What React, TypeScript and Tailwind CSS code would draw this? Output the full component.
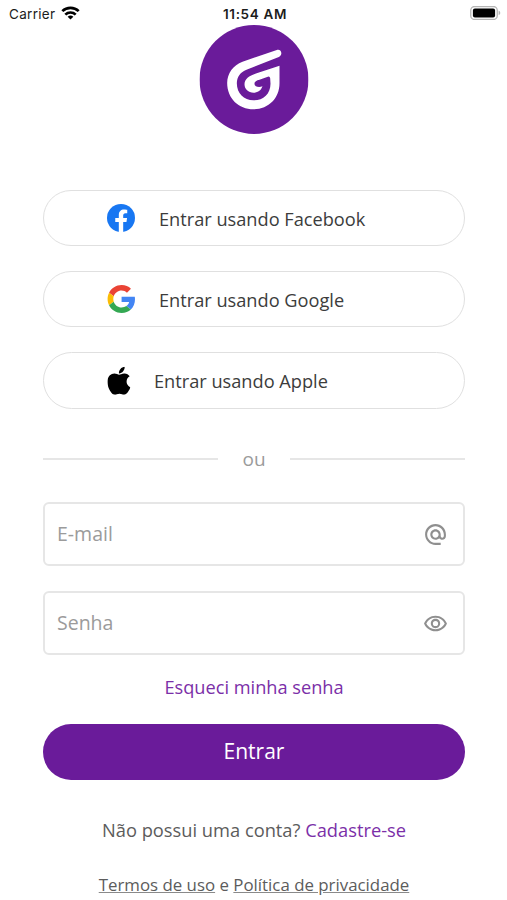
import type { ReactNode } from 'react';
import { MdAlternateEmail, MdOutlineRemoveRedEye } from 'react-icons/md';

function StatusBar() {
  return (
    <div className="grid h-[26px] shrink-0 grid-cols-3 items-center pt-[2px] pr-[6px] pl-[9px] font-[Inter,sans-serif] text-[13.5px] text-[#1c1c1c]">
      <div className="flex items-center gap-[6px]">
        <span className="tracking-[0.3px]">Carrier</span>
        <svg className="-mt-[3px]" width="19" height="14" viewBox="0 0 19 14" fill="none" stroke="#000" strokeWidth="2.7">
          <path d="M1.3 5.1a11.8 11.8 0 0 1 16.4 0" />
          <path d="M4.3 8.6a7.5 7.5 0 0 1 10.4 0" />
          <path d="M9.5 13.6 6.6 10.8a4.2 4.2 0 0 1 5.8 0z" fill="#000" stroke="none" />
        </svg>
      </div>
      <span className="text-center font-semibold tracking-[0.65px] whitespace-nowrap">11:54 AM</span>
      <svg className="-mt-[2px] justify-self-end" width="31" height="14" viewBox="0 0 31 14">
        <rect x="0.75" y="0.5" width="26.5" height="13" rx="3.8" fill="#fff" stroke="#b5b5b5" strokeWidth="1.3" />
        <rect x="2.9" y="2.4" width="22.2" height="9.2" rx="2" fill="#000" />
        <path d="M28.6 4.7c2.2.6 2.2 3.8 0 4.4z" fill="#b5b5b5" />
      </svg>
    </div>
  );
}

function Logo() {
  return (
    <svg className="mx-auto -mt-px shrink-0 translate-x-[0.5px]" width="109" height="109" viewBox="29 30 327 327">
      <circle cx="192.5" cy="193.5" r="163.5" fill="#6a1b9a" />
      <path
        fill="#fff"
        d="M261 105L158 140C130 150 112 175 112 204C112 250 146 283 191 283C236 283 269 250 269 205L269 152L205 173C180 181 164 190 164 208C164 223 176 233 191 233C205 233 214 226 218 214C208 218 194 216 194 206C194 199 200 196 209 194L234 185Q240 183 241 190L242 206C242 237 220 256 191 256C162 256 141 235 141 205C141 185 152 171 170 164L267 126C280 120 275 101 261 105Z"
      />
    </svg>
  );
}

function FacebookIcon() {
  return (
    <svg width="28" height="28" viewBox="0 0 24 24">
      <circle cx="12" cy="12" r="12" fill="#1877f2" />
      <path
        fill="#fff"
        d="M16.671 15.47l.532-3.47h-3.328V9.749c0-.949.465-1.874 1.956-1.874h1.513V4.922s-1.374-.235-2.686-.235c-2.741 0-4.533 1.662-4.533 4.669V12H7.078v3.47h3.047V24h3.75v-8.53z"
      />
    </svg>
  );
}

function GoogleIcon() {
  return (
    <svg width="28" height="28" viewBox="-1 0 48 48">
      <path fill="#EA4335" d="M24 9.5c3.54 0 6.71 1.22 9.21 3.6l6.85-6.85C35.9 2.38 30.47 0 24 0 14.62 0 6.51 5.38 2.56 13.22l7.98 6.19C12.43 13.72 17.74 9.5 24 9.5z" />
      <path fill="#4285F4" d="M46.98 24.55c0-1.57-.15-3.09-.38-4.55H24v9.02h12.94c-.58 2.96-2.26 5.48-4.78 7.18l7.73 6c4.51-4.18 7.09-10.36 7.09-17.65z" />
      <path fill="#FBBC05" d="M10.53 28.59c-.48-1.45-.76-2.99-.76-4.59s.27-3.14.76-4.59l-7.98-6.19C.92 16.46 0 20.12 0 24c0 3.88.92 7.54 2.56 10.78l7.97-6.19z" />
      <path fill="#34A853" d="M24 48c6.48 0 11.93-2.13 15.89-5.81l-7.73-6c-2.15 1.45-4.92 2.3-8.16 2.3-6.26 0-11.57-4.22-13.47-9.91l-7.98 6.19C6.51 42.62 14.62 48 24 48z" />
    </svg>
  );
}

function AppleIcon() {
  return (
    <svg className="translate-x-[0.4px] translate-y-[0.8px]" width="23" height="28" viewBox="4 32 376.5 448" preserveAspectRatio="none">
      <path d="M318.7 268.7c-.2-36.7 16.4-64.4 50-84.8-18.8-26.9-47.2-41.7-84.7-44.6-35.5-2.8-74.3 20.7-88.5 20.7-15 0-49.4-19.7-76.4-19.7C63.3 141.2 4 184.8 4 273.5q0 39.3 14.4 81.2c12.8 36.7 59 126.7 107.2 125.2 25.2-.6 43-17.9 75.8-17.9 31.8 0 48.3 17.9 76.4 17.9 48.6-.7 90.4-82.5 102.6-119.3-65.2-30.7-61.7-90-61.7-91.9zm-56.6-164.2c27.3-32.4 24.8-61.9 24-72.5-24.1 1.4-52 16.4-67.9 34.9-17.5 19.8-27.8 44.3-25.6 71.9 26.1 2 49.9-11.4 69.5-34.3z" />
    </svg>
  );
}

function SocialButton({ icon, children }: { icon: ReactNode; children: ReactNode }) {
  return (
    <button className="flex h-[56.2px] w-full items-center gap-6 rounded-full border-[1.5px] border-[#e0e0e0] pl-[63px] text-[18.2px] text-[#3c3c3c]">
      {icon}
      <span className="relative top-[1.5px]">{children}</span>
    </button>
  );
}

function Field({ type, placeholder, icon }: { type: string; placeholder: string; icon: ReactNode }) {
  return (
    <label className="flex h-[64.4px] items-center rounded-[6px] border-2 border-[#e6e6e6] pr-[15px] pl-3 text-[#8f8f8f]">
      <input
        type={type}
        placeholder={placeholder}
        className="min-w-0 flex-1 bg-transparent text-[19.5px] outline-none placeholder:text-[#9b9b9b]"
      />
      {icon}
    </label>
  );
}

export default function App() {
  return (
    <div className="flex h-[900px] w-[507px] flex-col overflow-hidden bg-white font-['Open_Sans',sans-serif]">
      <StatusBar />
      <Logo />

      <main className="mt-[56.2px] flex flex-col pr-[42px] pl-[43px]">
        <div className="flex flex-col gap-[24.9px]">
          <SocialButton icon={<FacebookIcon />}>Entrar usando Facebook</SocialButton>
          <SocialButton icon={<GoogleIcon />}>Entrar usando Google</SocialButton>
          <SocialButton icon={<AppleIcon />}>Entrar usando Apple</SocialButton>
        </div>

        {/* Divider */}
        <div className="mt-9 flex h-7 items-center gap-6 text-[19px] text-[#9b9b9b]">
          <span className="h-[2px] flex-1 bg-[#e6e6e6]" />
          <span className="relative top-px">ou</span>
          <span className="h-[2px] flex-1 bg-[#e6e6e6]" />
        </div>

        <form className="mt-[29.4px] flex flex-col gap-[24.6px]">
          <Field type="email" placeholder="E-mail" icon={<MdAlternateEmail size={25} />} />
          <Field type="password" placeholder="Senha" icon={<MdOutlineRemoveRedEye size={25} />} />
        </form>

        <a className="mt-[18px] self-center text-[18.2px] leading-7 text-[#7b2fa8]">Esqueci minha senha</a>
        <button className="mt-[22.4px] h-14 rounded-full bg-[#6a1b9a] text-[21px] text-white">Entrar</button>

        <p className="mt-[36px] self-center text-[18.3px] leading-7 whitespace-nowrap text-[#5c5c5c]">
          Não possui uma conta? <a className="text-[#7b2fa8]">Cadastre-se</a>
        </p>
        <p className="mt-[29px] self-center text-[16.85px] leading-6 whitespace-nowrap text-[#5c5c5c]">
          <a className="underline decoration-[#8a8a8a]">Termos de uso</a> e{' '}
          <a className="underline decoration-[#8a8a8a]">Política de privacidade</a>
        </p>
      </main>
    </div>
  );
}
